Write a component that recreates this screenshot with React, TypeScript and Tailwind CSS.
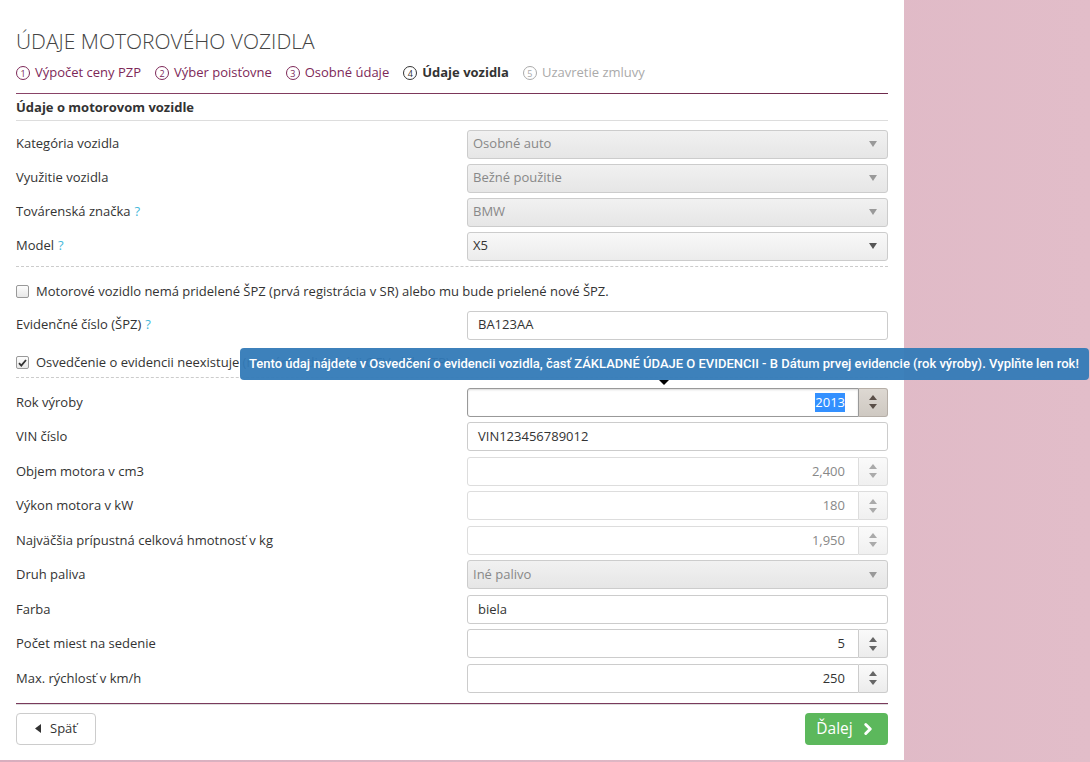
import React from 'react';
import { ChevronRight } from 'lucide-react';

const Help = () => <span className="ml-[4px] text-[#46b8da]">?</span>;

const Caret = ({ dark }: { dark?: boolean }) => (
  <svg width="8" height="6" viewBox="0 0 8 6" className={dark ? 'fill-[#555]' : 'fill-[#999]'}>
    <path d="M0 0h8L4 6z" />
  </svg>
);

const Select = ({ value, disabled }: { value: string; disabled?: boolean }) => (
  <div
    className={`flex h-[29px] items-center justify-between rounded-[3px] border border-[#ccc] pl-[5px] pr-[10px] ${
      disabled ? 'bg-linear-to-b from-[#f1f1f1] to-[#e6e6e6] text-[#888]' : 'bg-linear-to-b from-[#f8f8f8] to-[#ececec] text-[#333]'
    }`}
  >
    <span>{value}</span>
    <Caret dark={!disabled} />
  </div>
);

const TextInput = ({ value }: { value: string }) => (
  <div className="flex h-[29px] items-center rounded-[3px] border border-[#ccc] bg-white pl-[10px] text-[#333]">{value}</div>
);

const NumberInput = ({ value, disabled, focus }: { value: string; disabled?: boolean; focus?: boolean }) => (
  <div className="flex h-[29px]">
    <div
      className={`flex flex-1 items-center justify-end rounded-l-[3px] border pr-[13px] ${
        focus ? 'border-[#999] shadow-[inset_0_1px_2px_rgba(0,0,0,0.15)]' : disabled ? 'border-[#ddd]' : 'border-[#ccc]'
      } ${disabled ? 'text-[#888]' : 'text-[#333]'}`}
    >
      {focus ? <span className="bg-[#3390ff] text-white">{value}</span> : value}
    </div>
    <div
      className={`flex w-[29px] flex-col items-center justify-center gap-[4px] rounded-r-[3px] border-y border-r ${
        focus ? 'border-[#b5aea7] bg-linear-to-b from-[#ddd8d2] to-[#cfc9c2]' : disabled ? 'border-[#ddd] bg-linear-to-b from-[#fafafa] to-[#f0f0f0]' : 'border-[#ccc] bg-linear-to-b from-[#fafafa] to-[#ececec]'
      }`}
    >
      <svg width="8" height="5" viewBox="0 0 8 5" className={focus ? 'fill-[#5a4f48]' : disabled ? 'fill-[#aaa]' : 'fill-[#666]'}>
        <path d="M4 0l4 5H0z" />
      </svg>
      <svg width="8" height="5" viewBox="0 0 8 5" className={focus ? 'fill-[#5a4f48]' : disabled ? 'fill-[#aaa]' : 'fill-[#666]'}>
        <path d="M0 0h8L4 5z" />
      </svg>
    </div>
  </div>
);

const Row = ({ label, help, children, tall }: { label: string; help?: boolean; children: React.ReactNode; tall?: boolean }) => (
  <div className={`flex items-center ${tall ? 'h-[34.5px]' : 'h-[34px]'}`}>
    <div className="w-[451px] text-[#333]">
      {label}
      {help && <Help />}
    </div>
    <div className="flex-1">{children}</div>
  </div>
);

const Checkbox = ({ checked }: { checked?: boolean }) => (
  <span className="flex h-[13px] w-[13px] items-center justify-center rounded-[2px] border border-[#999] bg-linear-to-b from-[#fdfdfd] to-[#e8e8e8]">
    {checked && (
      <svg width="9" height="8" viewBox="0 0 9 8">
        <path d="M1 4.2l2.3 2.4L8 1" fill="none" stroke="#333" strokeWidth="1.8" />
      </svg>
    )}
  </span>
);

const Step = ({ n, label, state }: { n: number; label: string; state: 'done' | 'active' | 'todo' }) => {
  const color = state === 'done' ? 'text-[#7d2858] border-[#7d2858]' : state === 'active' ? 'text-[#333] border-[#333]' : 'text-[#aaa] border-[#aaa]';
  return (
    <div className={`flex items-center gap-[5px] ${color.split(' ')[0]}`}>
      <span className={`flex h-[14px] w-[14px] items-center justify-center rounded-full border text-[9px] leading-none ${color}`}>{n}</span>
      <span className={state === 'active' ? 'font-bold' : ''}>{label}</span>
    </div>
  );
};

export default function App() {
  return (
    <div className="flex h-[762px] w-[1090px] bg-linear-to-r from-[#d8aebe] to-[#e2bdc9] font-['Open_Sans',sans-serif] text-[13px]">
      <div className="relative h-[760px] w-[904px] bg-white px-[16px]">
        <h1 className="pt-[26px] text-[21px] leading-[30px] font-light text-[#444]">ÚDAJE MOTOROVÉHO VOZIDLA</h1>
        <div className="mt-[7px] flex h-[20px] items-center gap-[14px]">
          <Step n={1} label="Výpočet ceny PZP" state="done" />
          <Step n={2} label="Výber poisťovne" state="done" />
          <Step n={3} label="Osobné údaje" state="done" />
          <Step n={4} label="Údaje vozidla" state="active" />
          <Step n={5} label="Uzavretie zmluvy" state="todo" />
        </div>
        <div className="mt-[10px] h-px w-[872px] bg-linear-to-r from-[#8a4468] to-[#6e2a4c]" />
        <div className="flex h-[27px] w-[872px] items-center border-b border-[#ddd] pt-[1px] font-bold text-[#333]">Údaje o motorovom vozidle</div>

        <div className="mt-[6px] w-[872px]">
          <Row label="Kategória vozidla"><Select value="Osobné auto" disabled /></Row>
          <Row label="Využitie vozidla"><Select value="Bežné použitie" disabled /></Row>
          <Row label="Továrenská značka" help><Select value="BMW" disabled /></Row>
          <Row label="Model" help><Select value="X5" /></Row>

          <div className="mt-[3px] border-t border-dashed border-[#ccc]" />
          <div className="mt-[8px] flex h-[33px] items-center gap-[7px] text-[#333]">
            <Checkbox />
            <span>Motorové vozidlo nemá pridelené ŠPZ (prvá registrácia v SR) alebo mu bude prielené nové ŠPZ.</span>
          </div>
          <Row label="Evidenčné číslo (ŠPZ)" help><TextInput value="BA123AA" /></Row>
          <div className="mt-[6px] flex h-[29px] items-center gap-[7px] text-[#333]">
            <Checkbox checked />
            <span>Osvedčenie o evidencii neexistuje (nemám k dispozícii OEV alebo TP)</span>
          </div>
          <div className="border-t border-dashed border-[#ccc]" />

          <div className="mt-[7px]">
            <Row label="Rok výroby" tall><NumberInput value="2013" focus /></Row>
            <Row label="VIN číslo" tall><TextInput value="VIN123456789012" /></Row>
            <Row label="Objem motora v cm3" tall><NumberInput value="2,400" disabled /></Row>
            <Row label="Výkon motora v kW" tall><NumberInput value="180" disabled /></Row>
            <Row label="Najväčšia prípustná celková hmotnosť v kg" tall><NumberInput value="1,950" disabled /></Row>
            <Row label="Druh paliva" tall><Select value="Iné palivo" disabled /></Row>
            <Row label="Farba" tall><TextInput value="biela" /></Row>
            <Row label="Počet miest na sedenie" tall><NumberInput value="5" /></Row>
            <Row label="Max. rýchlosť v km/h" tall><NumberInput value="250" /></Row>
          </div>

          <div className="mt-[7px] h-px bg-[#7a3a5c]" />
          <div className="h-px bg-[#ddd]" />
          <div className="mt-[8px] flex items-center justify-between">
            <button className="flex h-[32px] w-[80px] items-center justify-center gap-[9px] rounded-[4px] border border-[#ccc] bg-white text-[#333]">
              <svg width="6" height="9" viewBox="0 0 6 9" className="fill-[#333]"><path d="M6 0v9L0 4.5z" /></svg>
              <span>Späť</span>
            </button>
            <button className="flex h-[32px] w-[83px] items-center justify-center gap-[6px] rounded-[4px] bg-[#5cb85c] text-[15.5px] text-white">
              <span>Ďalej</span>
              <ChevronRight size={18} strokeWidth={4} />
            </button>
          </div>
        </div>

        <div className="absolute left-[240px] top-[348px] w-[849px]">
          <div className="flex h-[32px] items-center rounded-[4px] bg-[#337ab7]/95 pl-[9px] font-['Roboto',sans-serif] text-[13px] font-medium whitespace-nowrap text-white">
            Tento údaj nájdete v Osvedčení o evidencii vozidla, časť ZÁKLADNÉ ÚDAJE O EVIDENCII - B Dátum prvej evidencie (rok výroby). Vyplňte len rok!
          </div>
          <div className="ml-[419px] h-0 w-0 border-x-[5px] border-t-[5px] border-x-transparent border-t-black" />
        </div>
      </div>
    </div>
  );
}
